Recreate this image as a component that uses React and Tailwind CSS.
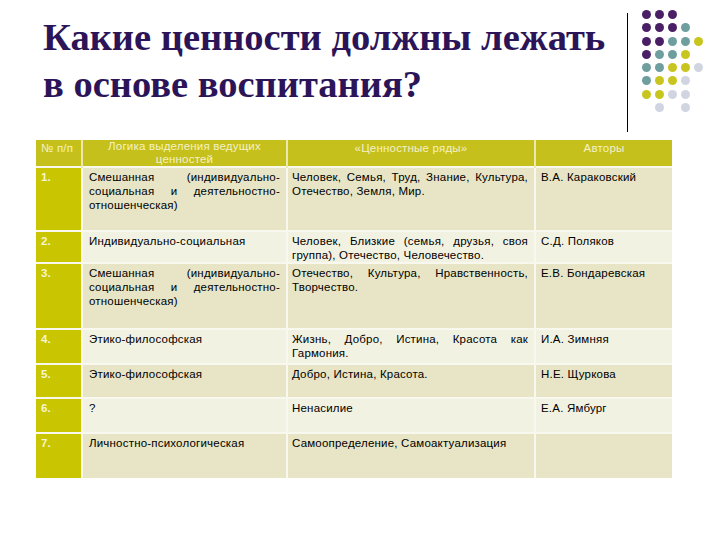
import React from 'react';

const P = '#4a1f66';
const T = '#6f9e9f';
const Y = '#c9c51f';
const L = '#d1d5e2';

// dots in the top-right corner, 5 columns x 8 rows
const dots = [
    [P, P, P, null, null],
    [P, P, P, T, null],
    [P, P, T, T, Y],
    [P, T, T, Y, null],
    [T, T, Y, Y, L],
    [T, Y, Y, L, null],
    [Y, Y, L, L, null],
    [null, L, null, L, null],
];

const rows = [
    {
        n: '1.',
        h: 'h-[64px]',
        dark: true,
        logic: ['Смешанная (индивидуально-', 'социальная и деятельностно-', 'отношенческая)'],
        values: ['Человек, Семья, Труд, Знание, Культура,', 'Отечество, Земля, Мир.'],
        author: 'В.А. Караковский',
    },
    {
        n: '2.',
        h: 'h-[32px]',
        dark: false,
        logic: ['Индивидуально-социальная'],
        values: ['Человек, Близкие (семья, друзья, своя', 'группа), Отечество, Человечество.'],
        author: 'С.Д. Поляков',
    },
    {
        n: '3.',
        h: 'h-[66px]',
        dark: true,
        logic: ['Смешанная (индивидуально-', 'социальная и деятельностно-', 'отношенческая)'],
        values: ['Отечество, Культура, Нравственность,', 'Творчество.'],
        author: 'Е.В. Бондаревская',
    },
    {
        n: '4.',
        h: 'h-[35px]',
        dark: false,
        logic: ['Этико-философская'],
        values: ['Жизнь, Добро, Истина, Красота как', 'Гармония.'],
        author: 'И.А. Зимняя',
    },
    {
        n: '5.',
        h: 'h-[34px]',
        dark: true,
        logic: ['Этико-философская'],
        values: ['Добро, Истина, Красота.'],
        author: 'Н.Е. Щуркова',
    },
    {
        n: '6.',
        h: 'h-[35px]',
        dark: false,
        logic: ['?'],
        values: ['Ненасилие'],
        author: 'Е.А. Ямбург',
    },
    {
        n: '7.',
        h: 'h-[45px]',
        dark: true,
        logic: ['Личностно-психологическая'],
        values: ['Самоопределение, Самоактуализация'],
        author: '',
    },
];

const Lines = ({ lines }) => (
    <div>
        {lines.map((line, i) => (
            <span
                key={i}
                className={
                    i < lines.length - 1
                        ? 'block text-justify [text-align-last:justify]'
                        : 'block'
                }
            >
                {line}
            </span>
        ))}
    </div>
);

const App = () => {
    return (
        <div className="w-[720px] h-[540px] bg-white relative overflow-hidden">
            <div className="flex pt-[14px]">
                <h1
                    className="pl-[43px] whitespace-nowrap text-[38.5px] leading-[47px] font-bold text-[#2c1458]"
                    style={{ fontFamily: '"Liberation Serif", "DejaVu Serif", serif' }}
                >
                    Какие ценности должны лежать
                    <br />
                    в основе воспитания?
                </h1>
            </div>

            {/* divider and dots */}
            <div className="absolute left-[627px] top-[13px] w-px h-[119px] bg-black" />
            <div className="absolute left-[642px] top-[10px] grid grid-cols-5 gap-x-[4px] gap-y-[4.3px]">
                {dots.flat().map((c, i) => (
                    <div
                        key={i}
                        className="w-[9px] h-[9px] rounded-full"
                        style={{ backgroundColor: c || 'transparent' }}
                    />
                ))}
            </div>

            <div
                className="absolute left-[36px] top-[140px] text-[11.5px] leading-[14px] tracking-[0.2px] text-black"
                style={{ fontFamily: '"Liberation Sans", Arial, sans-serif' }}
            >
                <table className="border-collapse table-fixed w-[636px]">
                    <colgroup>
                        <col className="w-[46px]" />
                        <col className="w-[205px]" />
                        <col className="w-[248px]" />
                        <col className="w-[137px]" />
                    </colgroup>
                    <thead>
                        <tr className="h-[26px] bg-[#c5c01c] text-[#f5f1c4] align-top leading-[13px]">
                            <th className="font-normal text-left pl-[5px] pt-[2px] border-r-2 border-[#ece9b0] whitespace-nowrap">
                                № п/п
                            </th>
                            <th className="font-normal text-center border-r-2 border-[#ece9b0]">
                                Логика выделения ведущих
                                <br />
                                ценностей
                            </th>
                            <th className="font-normal text-center pt-[2px] border-r-2 border-[#ece9b0]">
                                «Ценностные ряды»
                            </th>
                            <th className="font-normal text-center pt-[2px]">Авторы</th>
                        </tr>
                    </thead>
                    <tbody>
                        {rows.map((row) => (
                            <tr
                                key={row.n}
                                className={`${row.h} align-top border-t-2 border-[#f9f8ee] ${
                                    row.dark ? 'bg-[#e7e5c6]' : 'bg-[#f2f2e3]'
                                }`}
                            >
                                <td className="bg-[#c9c500] text-[#f7f5d0] font-bold pl-[5px] pt-[2px] border-r-2 border-[#f9f8ee]">
                                    {row.n}
                                </td>
                                <td className="px-[6px] pt-[2px] border-r-2 border-[#f9f8ee]">
                                    <Lines lines={row.logic} />
                                </td>
                                <td className="pl-[4px] pr-[6px] pt-[2px] border-r-2 border-[#f9f8ee]">
                                    <Lines lines={row.values} />
                                </td>
                                <td className="px-[5px] pt-[2px]">{row.author}</td>
                            </tr>
                        ))}
                    </tbody>
                </table>
            </div>
        </div>
    );
};

export default App;
